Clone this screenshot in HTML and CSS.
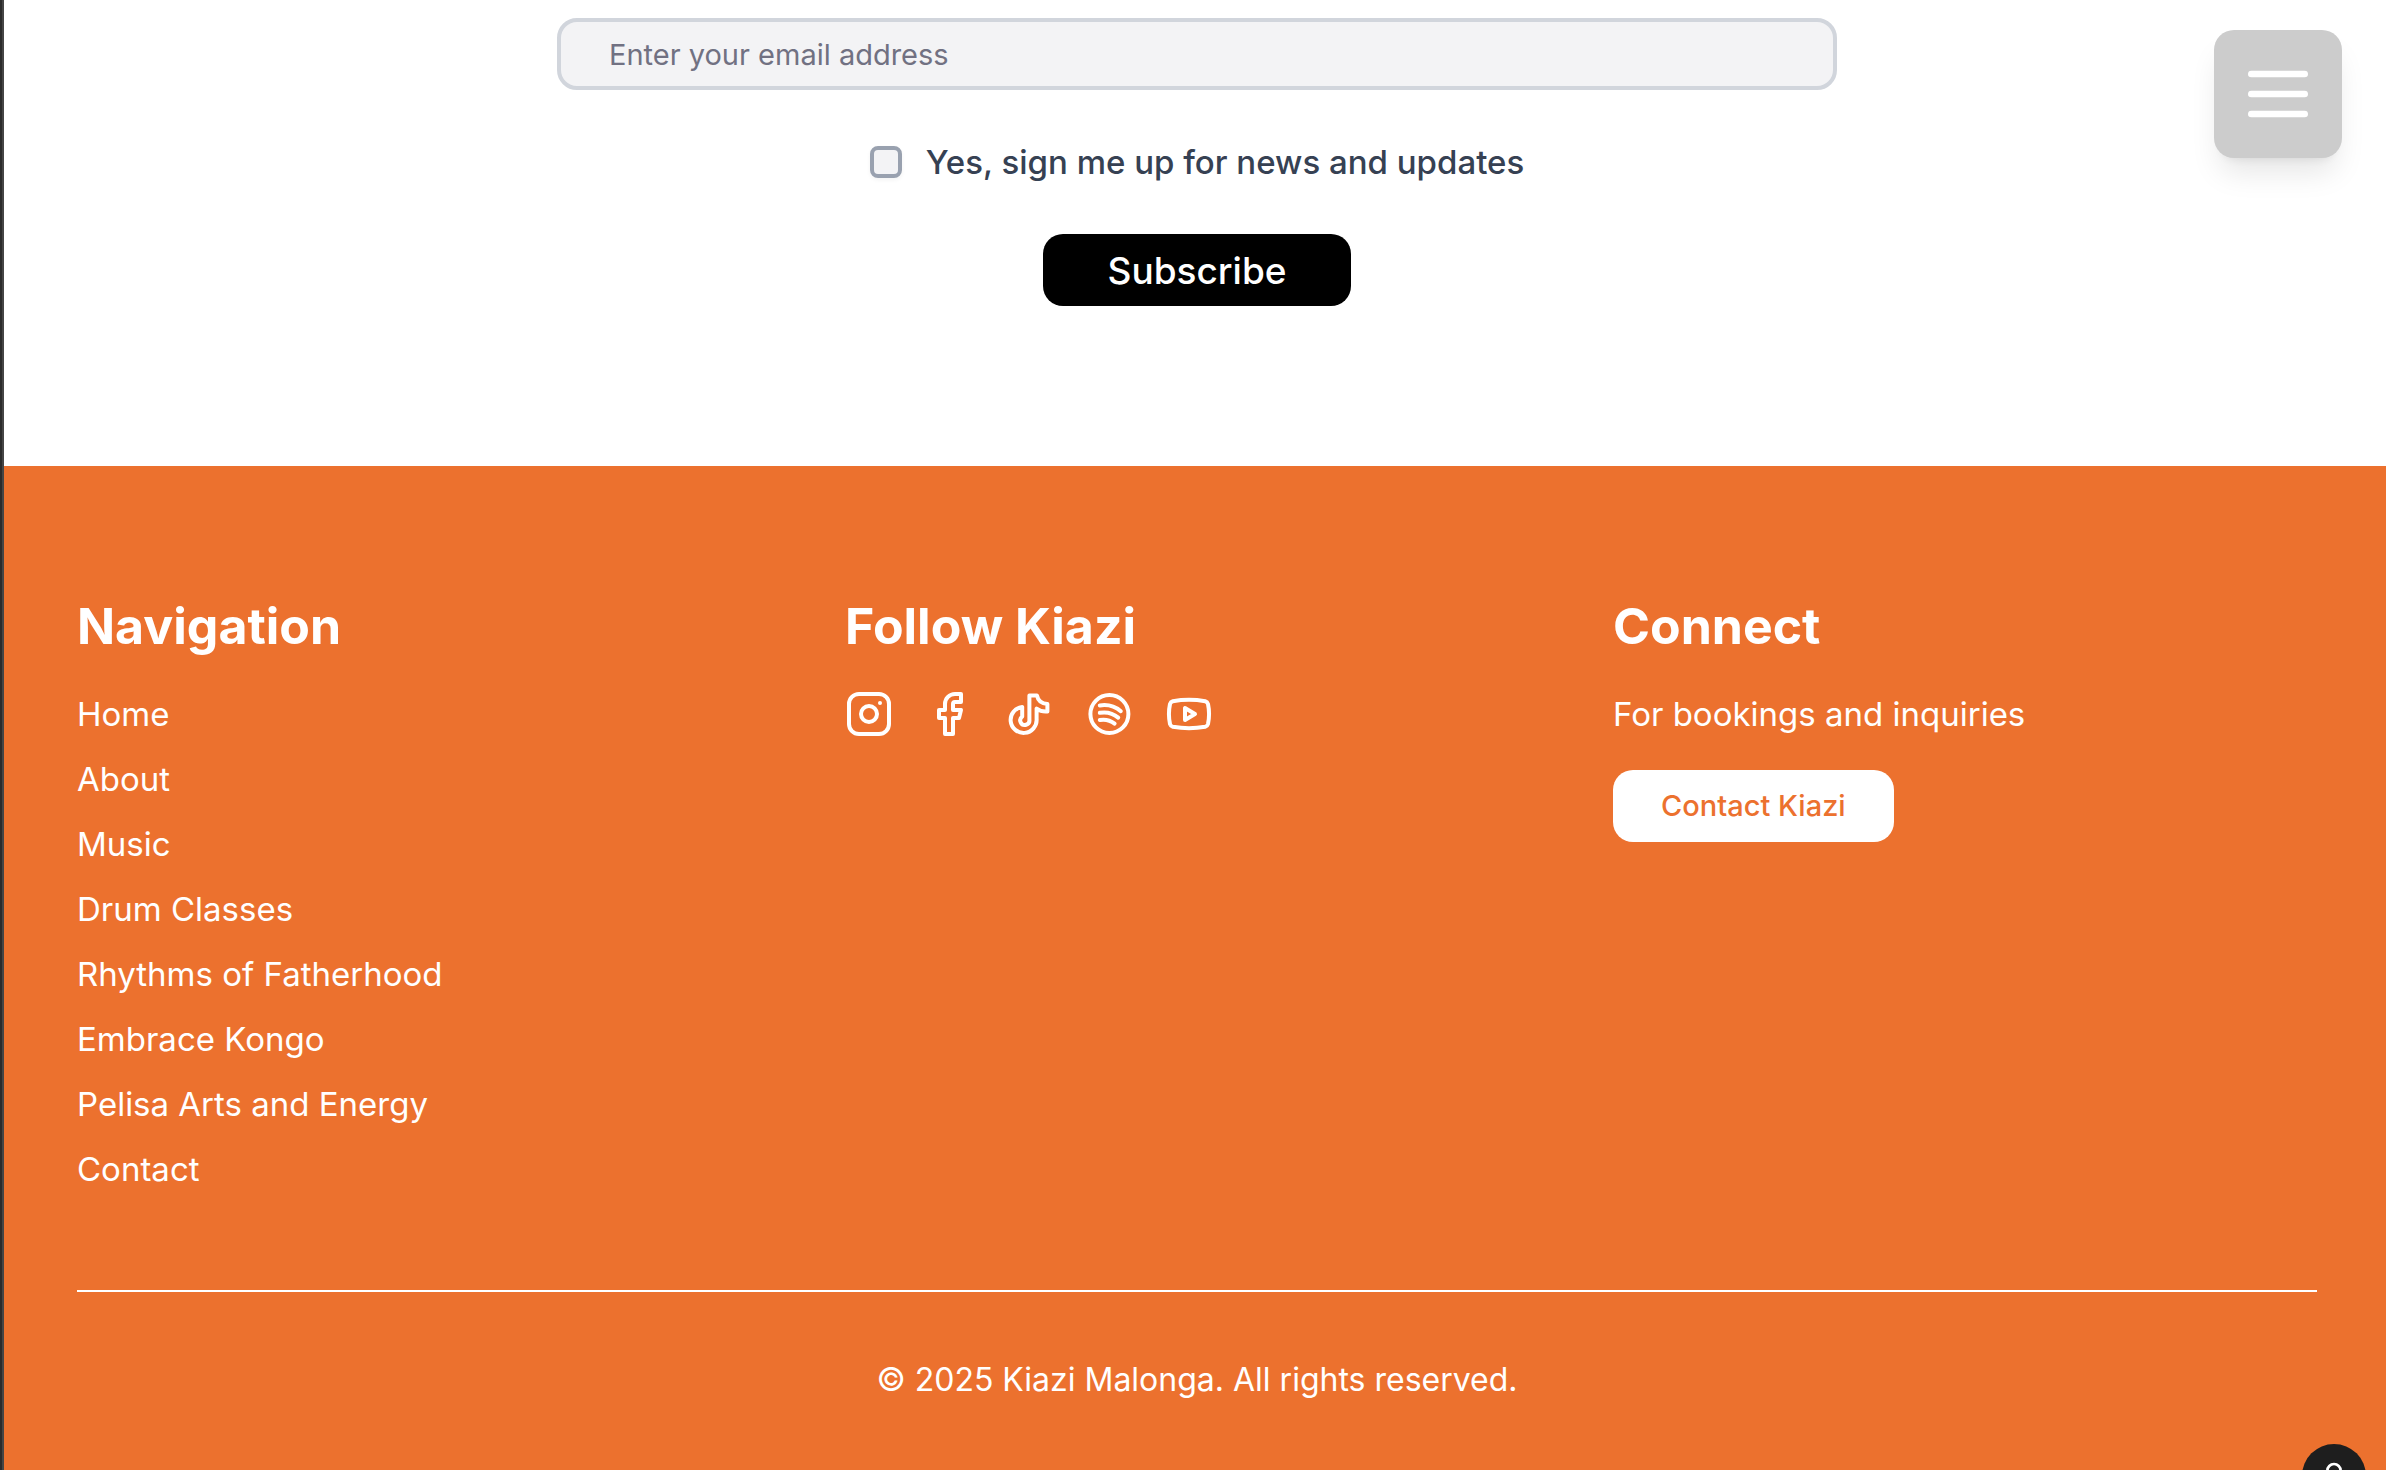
FILE: index.html
```
<!DOCTYPE html>
<html lang="en">
<head>
    <meta charset="UTF-8">
    <meta name="viewport" content="width=device-width, initial-scale=1.0">
    <title>Kiazi Malonga</title>
    <link rel="stylesheet" href="styles.css">
</head>
<body>
    <div class="page">
        <button class="menu-btn" type="button" aria-label="Open menu">
            <svg viewBox="0 0 24 24"><path d="M4 6h16M4 12h16M4 18h16"/></svg>
        </button>

        <form class="newsletter">
            <input class="email" type="email" placeholder="Enter your email address" aria-label="Email address">
            <div class="consent">
                <input type="checkbox" id="consent">
                <label for="consent">Yes, sign me up for news and updates</label>
            </div>
            <button class="subscribe-btn" type="submit">Subscribe</button>
        </form>

        <footer class="footer">
            <div class="footer-inner">
                <div class="columns">
                    <nav>
                        <h2>Navigation</h2>
                        <ul class="nav-list">
                            <li><a href="#">Home</a></li>
                            <li><a href="#">About</a></li>
                            <li><a href="#">Music</a></li>
                            <li><a href="#">Drum Classes</a></li>
                            <li><a href="#">Rhythms of Fatherhood</a></li>
                            <li><a href="#">Embrace Kongo</a></li>
                            <li><a href="#">Pelisa Arts and Energy</a></li>
                            <li><a href="#">Contact</a></li>
                        </ul>
                    </nav>

                    <div>
                        <h2>Follow Kiazi</h2>
                        <div class="socials">
                            <a href="#" aria-label="Instagram">
                                <svg viewBox="0 0 24 24"><rect x="2" y="2" width="20" height="20" rx="5"/><circle cx="12" cy="12" r="4"/><path d="M17.5 6.5h.01"/></svg>
                            </a>
                            <a href="#" aria-label="Facebook">
                                <svg viewBox="0 0 24 24"><path d="M18 2h-3a5 5 0 0 0-5 5v3H7v4h3v8h4v-8h3l1-4h-4V7a1 1 0 0 1 1-1h3z"/></svg>
                            </a>
                            <a href="#" aria-label="TikTok">
                                <svg viewBox="0 0 24 24"><path d="M12.2 2.8h3.8c.5 2.500 2.500 4 5.200 4.200v3.700c-2 .2-4-.4-5.400-1.400v5.200a6.500 6.500 0 1 1-7.200-6v4.800a2.300 2.300 0 1 0 3.600 1.600z"/></svg>
                            </a>
                            <a href="#" aria-label="Spotify">
                                <svg viewBox="0 0 24 24"><circle cx="12.200" cy="12" r="9.500"/><path d="M7.400 7.700c4-.6 7.500.3 10.500 2.900M7.400 11.400c3.500-.6 6.600.2 9.200 2.400M7.400 15c2.800-.5 5.200.1 7.400 1.800"/></svg>
                            </a>
                            <a href="#" aria-label="YouTube">
                                <svg viewBox="0 0 24 24"><path d="M2.500 17a24 24 0 0 1 0-10 2 2 0 0 1 1.400-1.400 49.560 49.560 0 0 1 16.200 0A2 2 0 0 1 21.500 7a24 24 0 0 1 0 10 2 2 0 0 1-1.400 1.400 49.550 49.550 0 0 1-16.200 0A2 2 0 0 1 2.500 17"/><path d="m10 15 5-3-5-3z"/></svg>
                            </a>
                        </div>
                    </div>

                    <div>
                        <h2>Connect</h2>
                        <p class="bookings">For bookings and inquiries</p>
                        <a class="contact-btn" href="#">Contact Kiazi</a>
                    </div>
                </div>

                <p class="copyright">© 2025 Kiazi Malonga. All rights reserved.</p>
            </div>
        </footer>

        <button class="account-btn" type="button" aria-label="Account">
            <svg viewBox="0 0 24 24"><circle cx="12" cy="8" r="5"/><path d="M20 21a8 8 0 0 0-16 0"/></svg>
        </button>
    </div>
</body>
</html>
```
FILE: styles.css
```
* {
    box-sizing: border-box;
}

body {
    margin: 0;
    min-height: 100vh;
    overflow: hidden;
    background: linear-gradient(90deg, #2b2b2b 2px, #454545 2px);
    font-family: Inter, sans-serif;
    font-size: 33px;
}

h2, p, ul {
    margin: 0;
    padding: 0;
}

a {
    color: inherit;
    text-decoration: none;
}

.page {
    width: 100%;
    min-height: 100vh;
    margin-left: 4px;
    background: white;
    display: flex;
    flex-direction: column;
}

/* newsletter */
.newsletter {
    display: flex;
    flex-direction: column;
    align-items: center;
    padding: 18px 32px 160px;
}

.email {
    width: 100%;
    max-width: 1280px;
    height: 72px;
    padding: 0 48px;
    border: 4px solid #d1d5dc;
    border-radius: 20px;
    background: #f3f3f5;
    font-family: inherit;
    font-size: 29px;
}

.email::placeholder {
    color: #717182;
}

.consent {
    display: flex;
    align-items: center;
    gap: 24px;
    height: 48px;
    margin: 48px 0;
    color: #364153;
    font-weight: 500;
}

.consent input {
    appearance: none;
    width: 32px;
    height: 32px;
    margin: 0;
    border: 4px solid #99a1af;
    border-radius: 8px;
    background: #f3f3f5;
    box-shadow: 0 2px 4px rgba(0,0,0,0.05);
}

button {
    border: none;
    cursor: pointer;
    font-family: inherit;
}

.subscribe-btn {
    height: 72px;
    padding: 0 64px;
    border-radius: 20px;
    background: black;
    color: white;
    font-size: 37px;
    font-weight: 500;
}

/* footer */
.footer {
    flex: 1;
    padding: 128px 32px 64px;
    background: #ec712e;
    color: white;
}

.footer-inner {
    max-width: 2240px;
    margin: 0 auto;
}

.columns {
    display: grid;
    grid-template-columns: repeat(3, 1fr);
    gap: 64px;
    padding-bottom: 96px;
    border-bottom: 2px solid white;
}

h2 {
    margin-bottom: 32px;
    font-size: 50px;
    line-height: 64px;
    font-weight: 700;
}

.nav-list {
    list-style: none;
    display: grid;
    gap: 16px;
}

.nav-list li {
    line-height: 49px;
}

.socials {
    display: flex;
    gap: 32px;
}

.socials a {
    width: 48px;
    height: 48px;
}

svg {
    display: block;
    width: 100%;
    height: 100%;
    fill: none;
    stroke: white;
    stroke-width: 2;
    stroke-linecap: round;
    stroke-linejoin: round;
}

.bookings {
    line-height: 48px;
    margin-bottom: 32px;
}

.contact-btn {
    display: inline-block;
    padding: 0 48px;
    border-radius: 20px;
    background: white;
    color: #ec712e;
    font-size: 29px;
    line-height: 72px;
    font-weight: 500;
}

.copyright {
    margin-top: 64px;
    font-size: 32px;
    line-height: 48px;
    text-align: center;
}

/* floating buttons */
.menu-btn {
    position: fixed;
    top: 30px;
    right: 44px;
    width: 128px;
    height: 128px;
    padding: 24px;
    border-radius: 20px;
    background: #ccc;
    box-shadow: 0 20px 30px -6px rgba(0,0,0,0.1), 0 8px 12px -8px rgba(0,0,0,0.1);
}

.account-btn {
    position: fixed;
    right: 20px;
    bottom: -38px;
    width: 64px;
    height: 64px;
    padding: 16px;
    border-radius: 50%;
    background: #1e1e1e;
}
```
